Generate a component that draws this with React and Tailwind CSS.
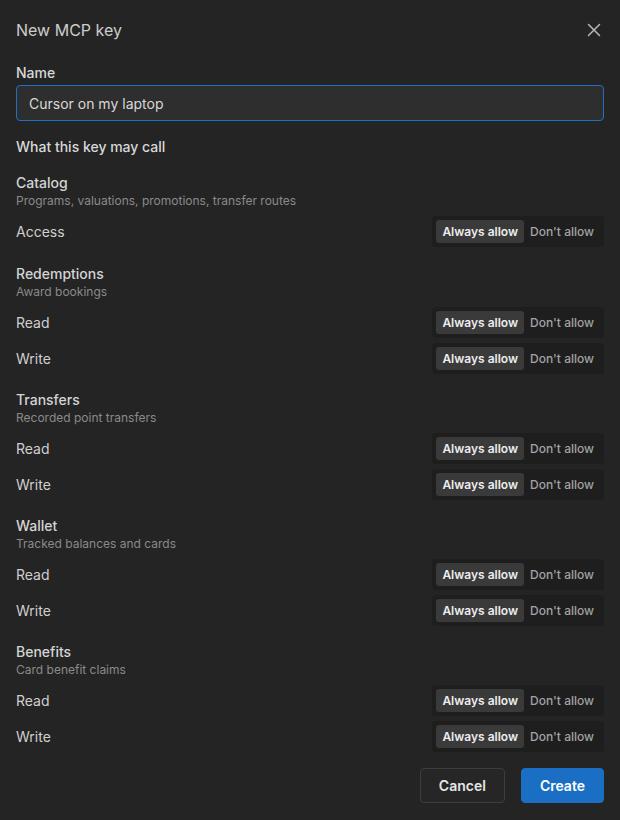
import React from "react";

const groups = [
  { title: "Catalog", sub: "Programs, valuations, promotions, transfer routes", rows: ["Access"] },
  { title: "Redemptions", sub: "Award bookings", rows: ["Read", "Write"] },
  { title: "Transfers", sub: "Recorded point transfers", rows: ["Read", "Write"] },
  { title: "Wallet", sub: "Tracked balances and cards", rows: ["Read", "Write"] },
  { title: "Benefits", sub: "Card benefit claims", rows: ["Read", "Write"] },
];

function Segmented() {
  return (
    <div className="flex items-center rounded-[4px] bg-[#1e1e1e] p-1">
      <button className="h-[23px] rounded-[3px] bg-[#3a3a3a] px-[6px] text-[12px] font-semibold leading-none text-[#ececec]">
        Always allow
      </button>
      <button className="h-[23px] rounded-[3px] px-[6px] text-[12px] font-medium leading-none text-[#a3a3a3]">
        Don't allow
      </button>
    </div>
  );
}

export default function App() {
  return (
    <div
      className="flex h-[820px] w-[620px] flex-col bg-[#242424] px-4 pt-[18px]"
      style={{ fontFamily: "Inter, 'Liberation Sans', sans-serif" }}
    >
      <div className="flex h-6 items-center justify-between">
        <h1 className="text-[16px] font-normal leading-6 text-[#cccccc]">New MCP key</h1>
        <svg width="24" height="24" viewBox="0 0 24 24" className="mr-[-2px] text-[#b8b8b8]" fill="none" stroke="currentColor" strokeWidth="1.5" strokeLinecap="round">
          <path d="M6.5 6.5l11 11M17.5 6.5l-11 11" />
        </svg>
      </div>

      <label className="mt-[21px] text-[14px] font-medium leading-5 text-[#d8d8d8]">Name</label>
      <div className="mt-[2px] flex h-9 items-center rounded-[4px] border border-[#1f6fc2] bg-[#2e2e2e] px-3">
        <span className="text-[14px] text-[#d8d8d8]">Cursor on my laptop</span>
      </div>

      <div className="mt-4 text-[14px] font-medium leading-5 text-[#d8d8d8]">What this key may call</div>

      {groups.map((g, i) => (
        <div key={g.title} className={i === 0 ? "mt-4 mb-[1px] flex flex-col" : "mt-4 flex flex-col"}>
          <div className="text-[14px] font-medium leading-5 text-[#d4d4d4]">{g.title}</div>
          <div className="text-[12px] leading-4 text-[#8a8a8a]">{g.sub}</div>
          <div className="mt-[7px] flex flex-col gap-[5px]">
            {g.rows.map((r) => (
              <div key={r} className="flex items-center justify-between">
                <span className="text-[14px] text-[#cfcfcf]">{r}</span>
                <Segmented />
              </div>
            ))}
          </div>
        </div>
      ))}

      <div className="mt-4 flex justify-end gap-4">
        <button className="h-[35px] rounded-[4px] border border-[#3d3d3d] bg-[#262626] px-[18px] text-[14px] font-semibold text-[#e6e6e6]">
          Cancel
        </button>
        <button className="h-[35px] rounded-[4px] border border-[#1a6fc4] bg-[#1a6fc4] px-[18px] text-[14px] font-semibold text-white">
          Create
        </button>
      </div>
    </div>
  );
}
